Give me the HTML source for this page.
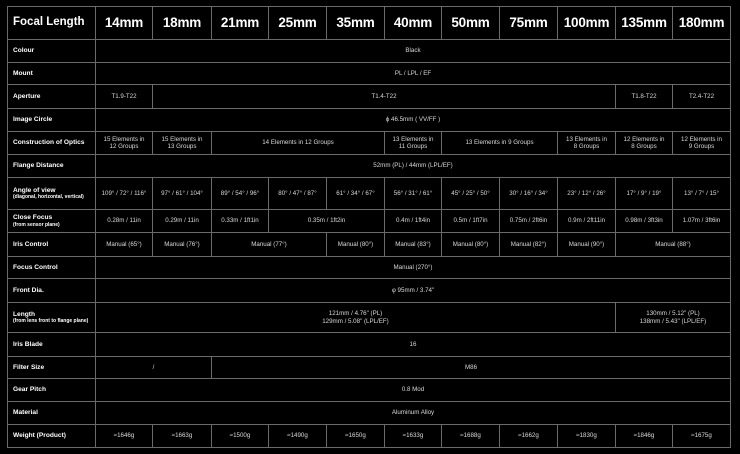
<!DOCTYPE html>
<html><head><meta charset="utf-8"><style>
html,body{margin:0;padding:0;background:#000;width:740px;height:454px;overflow:hidden}
table{position:absolute;left:7px;top:6px;border-collapse:collapse;table-layout:fixed;width:724px;font-family:"Liberation Sans",Arial,sans-serif;color:#d8d8d8}
td,th{border:1px solid #6a6a6a;padding:0;text-align:center;font-size:6.2px;line-height:7.5px;overflow:hidden;white-space:nowrap}
th{font-size:13.5px;font-weight:bold;color:#fff;letter-spacing:-0.2px}
th.l{text-align:left;padding-left:5px;font-size:11.5px;letter-spacing:0}
td.l{text-align:left;padding-left:5px;font-weight:bold;color:#fff;font-size:6.6px}
td.l small{display:block;font-size:5px;line-height:6px}
</style></head><body>
<table>
<colgroup><col style="width:88px"><col style="width:57px"><col style="width:59px"><col style="width:57px"><col style="width:58px"><col style="width:58px"><col style="width:57px"><col style="width:58px"><col style="width:58px"><col style="width:58px"><col style="width:57px"><col style="width:58px"></colgroup>
<tr style="height:33px"><th class="l">Focal Length</th><th>14mm</th><th>18mm</th><th>21mm</th><th>25mm</th><th>35mm</th><th>40mm</th><th>50mm</th><th>75mm</th><th>100mm</th><th>135mm</th><th>180mm</th></tr>
<tr style="height:23px"><td class="l">Colour</td><td colspan="11">Black</td></tr>
<tr style="height:22px"><td class="l">Mount</td><td colspan="11">PL / LPL / EF</td></tr>
<tr style="height:24px"><td class="l">Aperture</td><td>T1.9-T22</td><td colspan="8">T1.4-T22</td><td>T1.8-T22</td><td>T2.4-T22</td></tr>
<tr style="height:23px"><td class="l">Image Circle</td><td colspan="11">ϕ 46.5mm ( VV/FF )</td></tr>
<tr style="height:23px"><td class="l">Construction of Optics</td><td>15 Elements in<br>12 Groups</td><td>15 Elements in<br>13 Groups</td><td colspan="3">14 Elements in 12 Groups</td><td>13 Elements in<br>11 Groups</td><td colspan="2">13 Elements in 9 Groups</td><td>13 Elements in<br>8 Groups</td><td>12 Elements in<br>8 Groups</td><td>12 Elements in<br>9 Groups</td></tr>
<tr style="height:23px"><td class="l">Flange Distance</td><td colspan="11">52mm (PL) / 44mm (LPL/EF)</td></tr>
<tr style="height:32px"><td class="l">Angle of view<small>(diagonal, horizontal, vertical)</small></td><td>109° / 72° / 116°</td><td>97° / 61° / 104°</td><td>89° / 54° / 96°</td><td>80° / 47° / 87°</td><td>61° / 34° / 67°</td><td>56° / 31° / 61°</td><td>45° / 25° / 50°</td><td>30° / 16° / 34°</td><td>23° / 12° / 26°</td><td>17° / 9° / 19°</td><td>13° / 7° / 15°</td></tr>
<tr style="height:23px"><td class="l">Close Focus<small>(from sensor plane)</small></td><td>0.28m / 11in</td><td>0.29m / 11in</td><td>0.33m / 1ft1in</td><td colspan="2">0.35m / 1ft2in</td><td>0.4m / 1ft4in</td><td>0.5m / 1ft7in</td><td>0.75m / 2ft6in</td><td>0.9m / 2ft11in</td><td>0.98m / 3ft3in</td><td>1.07m / 3ft6in</td></tr>
<tr style="height:24px"><td class="l">Iris Control</td><td>Manual (65°)</td><td>Manual (76°)</td><td colspan="2">Manual (77°)</td><td>Manual (80°)</td><td>Manual (83°)</td><td>Manual (80°)</td><td>Manual (82°)</td><td>Manual (90°)</td><td colspan="2">Manual (88°)</td></tr>
<tr style="height:22px"><td class="l">Focus Control</td><td colspan="11">Manual (270°)</td></tr>
<tr style="height:24px"><td class="l">Front Dia.</td><td colspan="11">φ 95mm / 3.74"</td></tr>
<tr style="height:30px"><td class="l">Length<small>(from lens front to flange plane)</small></td><td colspan="9">121mm / 4.76" (PL)<br>129mm / 5.08" (LPL/EF)</td><td colspan="2">130mm / 5.12" (PL)<br>138mm / 5.43" (LPL/EF)</td></tr>
<tr style="height:24px"><td class="l">Iris Blade</td><td colspan="11">16</td></tr>
<tr style="height:22px"><td class="l">Filter Size</td><td colspan="2">/</td><td colspan="9">M86</td></tr>
<tr style="height:23px"><td class="l">Gear Pitch</td><td colspan="11">0.8 Mod</td></tr>
<tr style="height:23px"><td class="l">Material</td><td colspan="11">Aluminum Alloy</td></tr>
<tr style="height:23px"><td class="l">Weight (Product)</td><td>≈1646g</td><td>≈1663g</td><td>≈1500g</td><td>≈1490g</td><td>≈1650g</td><td>≈1633g</td><td>≈1688g</td><td>≈1662g</td><td>≈1830g</td><td>≈1846g</td><td>≈1675g</td></tr>
</table>
</body></html>
